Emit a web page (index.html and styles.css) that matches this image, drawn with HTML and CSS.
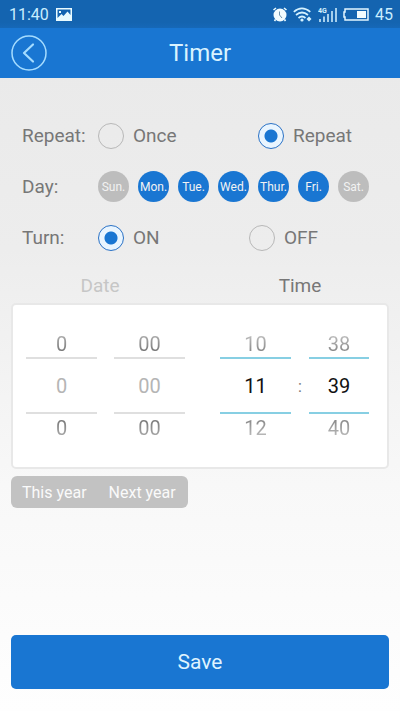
FILE: index.html
```html
<!DOCTYPE html>
<html lang="en">
<head>
<meta charset="utf-8">
<meta name="viewport" content="width=device-width, initial-scale=1">
<title>Timer</title>
<link rel="stylesheet" href="styles.css">
</head>
<body>
<div class="status">
  <span class="clock">11:40</span>
  <svg class="photo" width="16" height="13" viewBox="0 0 16 13"><path fill="#e9fbff" fill-rule="evenodd" d="M0 0h16v13H0zM1.500 1.500v8.500l4-4 2 2 4-4.500 3 3.500v-5.500zM3 3h2v2H3z"/></svg>
  <div class="system">
    <svg width="14" height="15" viewBox="0 0 14 15"><circle cx="7" cy="8" r="6.500" fill="#f2fcff"/><path d="M.5 3l2.500-2M13.500 3l-2.500-2M2.500 12.500l-1 1.500M11.500 12.500l1 1.500" stroke="#e9fbff" stroke-width="1.600"/><path d="M6.500 4.500v3.500l2.500 3" fill="none" stroke="#6f93ae" stroke-width="1"/></svg>
    <svg class="wifi" width="19" height="15" viewBox="0 0 19 15"><g fill="none" stroke="#d5f2ff" stroke-width="1.700"><path d="M.8 4.800q8-7 16.500 0M3 8q6-5 12 0M5.500 11q3.500-3 7 0"/></g><circle cx="9" cy="13" r="1.600" fill="#d5f2ff"/><path d="M16 9.500l2.500 2.500-2.500 2.500-2.500-2.500z" fill="#d5f2ff"/></svg>
    <svg class="signal" width="19" height="15" viewBox="0 0 19 15"><text x="0" y="6" class="network">4G</text><path d="M2 15v-3M6 15V9.500M10 15V7M14 15V4M18 15V1" stroke="#d5f2ff" stroke-width="1.500"/></svg>
    <svg class="battery" width="26" height="13" viewBox="0 0 26 13"><path d="M2 1h23v11H2V9H1V4h1z" fill="none" stroke="#e2f6ff" stroke-width="1.500"/><path fill="#f2fcff" d="M14 3h9v7h-9z"/></svg>
    <span>45</span>
  </div>
</div>
<header class="bar">
  <button class="back" type="button" aria-label="Back"><svg width="36" height="36" viewBox="0 0 36 36" fill="none" stroke="#a5dcff"><circle cx="18" cy="18" r="17" stroke-width="1.500"/><path d="M22 9.500L13 18l9 8.500" stroke-width="2.200" stroke-linecap="round" stroke-linejoin="round"/></svg></button>
  <h1>Timer</h1>
</header>
<form class="timer">
  <div class="row" role="radiogroup" aria-labelledby="repeat-label">
    <span class="name" id="repeat-label">Repeat:</span>
    <div class="choices">
      <label class="choice wide"><input type="radio" name="repeat">Once</label>
      <label class="choice"><input type="radio" name="repeat" checked>Repeat</label>
    </div>
  </div>
  <div class="row" role="group" aria-labelledby="day-label">
    <span class="name" id="day-label">Day:</span>
    <div class="days">
      <label class="day"><input type="checkbox"><span>Sun.</span></label>
      <label class="day"><input type="checkbox" checked><span>Mon.</span></label>
      <label class="day"><input type="checkbox" checked><span>Tue.</span></label>
      <label class="day"><input type="checkbox" checked><span>Wed.</span></label>
      <label class="day"><input type="checkbox" checked><span>Thur.</span></label>
      <label class="day"><input type="checkbox" checked><span>Fri.</span></label>
      <label class="day"><input type="checkbox"><span>Sat.</span></label>
    </div>
  </div>
  <div class="row" role="radiogroup" aria-labelledby="turn-label">
    <span class="name" id="turn-label">Turn:</span>
    <div class="choices">
      <label class="choice narrow"><input type="radio" name="turn" checked>ON</label>
      <label class="choice"><input type="radio" name="turn">OFF</label>
    </div>
  </div>
  <div class="heads"><h2 class="muted">Date</h2><h2>Time</h2></div>
  <div class="card">
    <div class="wheel off"><button type="button" class="prev">0</button><input aria-label="Month" value="0"><button type="button" class="next">0</button></div>
    <div class="wheel off"><button type="button" class="prev">00</button><input aria-label="Date" value="00"><button type="button" class="next">00</button></div>
    <div class="wheel hour"><button type="button" class="prev">10</button><input aria-label="Hour" value="11"><button type="button" class="next">12</button></div>
    <span class="colon">:</span>
    <div class="wheel minute"><button type="button" class="prev">38</button><input aria-label="Minute" value="39"><button type="button" class="next">40</button></div>
  </div>
  <div class="years"><button type="button">This year</button><button type="button">Next year</button></div>
  <button class="save" type="button">Save</button>
</form>
</body>
</html>
```
FILE: styles.css
```css
* { box-sizing: border-box; }

body {
  margin: 0;
  min-height: 100vh;
  display: flex;
  flex-direction: column;
  font-family: Roboto, "Liberation Sans", sans-serif;
  font-size: 19px;
  color: #777;
  background: linear-gradient(#eaeaea 10%, #ededed 35%, #f8f8f8 68%, #fefefe);
}

button, input { font: inherit; margin: 0; padding: 0; border: 0; background: none; color: inherit; }
h1, h2 { margin: 0; font-weight: 400; }
svg { display: block; }

.status {
  display: flex;
  align-items: center;
  height: 28px;
  padding: 0 7px 0 9px;
  background: linear-gradient(#1464b0 80%, #1668b8);
  color: #c9eeff;
  font-size: 16px;
}
.photo { margin-left: 7px; }
.system { display: flex; align-items: center; gap: 6px; margin-left: auto; }
.network { font-size: 7px; font-weight: 700; fill: #d5f2ff; }

.bar {
  display: grid;
  grid-template-columns: 36px 1fr 36px;
  align-items: center;
  height: 50px;
  padding: 0 11px;
  background: #1976d2;
}
.bar h1 { font-size: 24px; line-height: 28px; text-align: center; color: #d9f3ff; }

.timer { flex: 1; display: flex; flex-direction: column; padding: 32px 11px 22px; }

.row { display: flex; align-items: center; height: 51px; padding-left: 11px; }
.name { width: 76px; flex: none; }
.choices { display: flex; flex: 1; }
.choice { display: flex; align-items: center; gap: 9px; }
.wide { flex: 0 0 160px; }
.narrow { flex: 0 0 151px; }
.choice input {
  appearance: none;
  width: 26px;
  height: 26px;
  border: 1px solid #b8b8b8;
  border-radius: 50%;
}
.choice input:checked {
  border-color: #2a72c6;
  background: radial-gradient(circle, #1976d2 6px, #e9f5ff 7px);
}

.days { display: flex; gap: 9px; }
.day { display: grid; }
.day input { appearance: none; width: 31px; height: 31px; border-radius: 50%; background: #bdbdbd; }
.day input:checked { background: #1976d2; }
.day input, .day span { grid-area: 1 / 1; }
.day span { place-self: center; color: #f2f2f2; font-size: 12px; line-height: 16px; }

.heads { display: grid; grid-template-columns: 1fr 1fr; margin: 9px -11px 3px; text-align: center; }
.heads h2 { font-size: 19px; line-height: 28px; }
.heads .muted { color: #c6c6c6; }

.card {
  display: grid;
  grid-template-columns: 71fr 17px 71fr 35px 71fr 18px 60fr;
  align-items: center;
  padding: 26px 18px 25px 13px;
  border: 2px solid #e8e8e8;
  border-radius: 5px;
  background: #fff;
}
.wheel { display: flex; flex-direction: column; font-size: 20px; line-height: 24px; }
.wheel:nth-child(2) { grid-column: 3; }
.wheel.hour { grid-column: 5; }
.colon { grid-column: 6; text-align: center; font-size: 16px; }
.wheel.minute { grid-column: 7; }
.wheel input {
  width: 100%;
  height: 57px;
  border: solid #87cfe3;
  border-width: 2px 0;
  text-align: center;
  color: #111;
}
.wheel.off input { border-color: #dfdfdf; color: #b5b5b5; }
.prev, .next { color: transparent; background-clip: text; }
.prev { height: 26px; background-image: linear-gradient(#bbb 20%, #777); }
.next { height: 28px; background-image: linear-gradient(#777, #bbb 80%); }
.off .prev { background-image: linear-gradient(#aaa 20%, #666); }
.off .next { background-image: linear-gradient(#666, #aaa 80%); }

.years {
  display: flex;
  align-self: flex-start;
  gap: 22px;
  margin-top: 7px;
  padding: 0 12px 0 11px;
  border-radius: 6px;
  background: #c2c2c2;
  color: #fafafa;
}
.years button { height: 32px; font-size: 16px; }

.save { height: 54px; margin-top: auto; border-radius: 5px; background: #1976d2; color: #dff3ff; font-size: 21px; }
```
